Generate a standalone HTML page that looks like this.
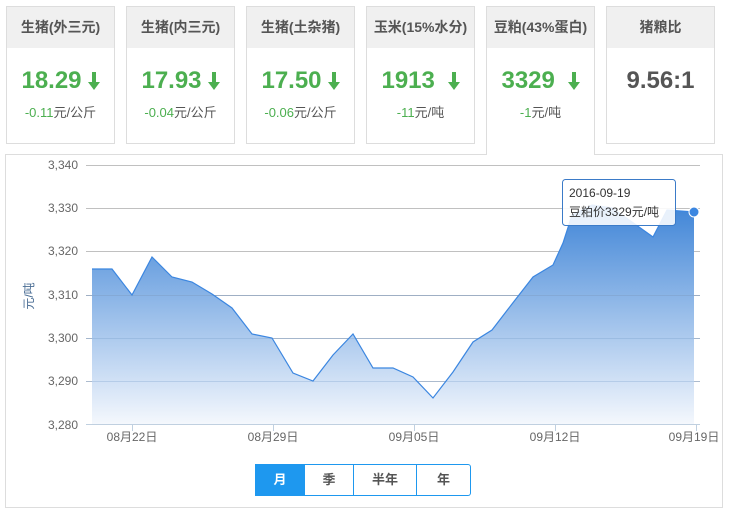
<!DOCTYPE html>
<html><head><meta charset="utf-8"><style>
body{margin:0;width:730px;height:515px;background:#fff;font-family:"Liberation Sans","Noto Sans CJK SC",sans-serif;position:relative;overflow:hidden}
.card{position:absolute;top:6px;width:107px;height:136px;border:1px solid #ddd;background:#fff;box-sizing:content-box}
.card .h{height:41px;background:#f0f0f0;color:#555;font-size:14px;font-weight:bold;text-align:center;line-height:41px}
.card .v{text-align:center;color:#4caf50;font-weight:bold;font-size:24px;margin-top:17px;height:32px;line-height:32px}
.card .v svg{vertical-align:-2px;margin-left:6px}
.card .d{text-align:center;font-size:13px;color:#555;margin-top:5px}
.card .d span{color:#4caf50}
.act{height:148px;border-bottom:none;z-index:2}
.panel{position:absolute;left:5px;top:154px;width:716px;height:352px;border:1px solid #ddd;background:#fff}
.btns{position:absolute;left:255px;top:464px;height:32px;display:flex;z-index:3}
.btns div{border:1px solid #1e98ef;border-left:none;height:30px;line-height:30px;text-align:center;font-size:13px;color:#555;font-weight:bold}
.btns div.on{background:#1e98ef;color:#fff;border-left:1px solid #1e98ef}
</style></head><body>
<div class="card" style="left:6px"><div class="h">生猪(外三元)</div><div class="v">18.29<svg width="12" height="18" viewBox="0 0 12 18"><path d="M4 0h4v10h4L6 18 0 10h4z" fill="#4caf50"/></svg></div><div class="d"><span>-0.11</span>元/公斤</div></div>
<div class="card" style="left:126px"><div class="h">生猪(内三元)</div><div class="v">17.93<svg width="12" height="18" viewBox="0 0 12 18"><path d="M4 0h4v10h4L6 18 0 10h4z" fill="#4caf50"/></svg></div><div class="d"><span>-0.04</span>元/公斤</div></div>
<div class="card" style="left:246px"><div class="h">生猪(土杂猪)</div><div class="v">17.50<svg width="12" height="18" viewBox="0 0 12 18"><path d="M4 0h4v10h4L6 18 0 10h4z" fill="#4caf50"/></svg></div><div class="d"><span>-0.06</span>元/公斤</div></div>
<div class="card" style="left:366px"><div class="h">玉米(15%水分)</div><div class="v">1913 <svg width="12" height="18" viewBox="0 0 12 18"><path d="M4 0h4v10h4L6 18 0 10h4z" fill="#4caf50"/></svg></div><div class="d"><span>-11</span>元/吨</div></div>
<div class="card act" style="left:486px"><div class="h">豆粕(43%蛋白)</div><div class="v">3329 <svg width="12" height="18" viewBox="0 0 12 18"><path d="M4 0h4v10h4L6 18 0 10h4z" fill="#4caf50"/></svg></div><div class="d"><span>-1</span>元/吨</div></div>
<div class="card" style="left:606px"><div class="h">猪粮比</div><div class="v" style="color:#555">9.56:1</div></div>
<div class="panel"></div>
<svg style="position:absolute;left:0;top:0;z-index:2" width="730" height="515">
<defs><linearGradient id="g" x1="0" y1="200" x2="0" y2="425" gradientUnits="userSpaceOnUse"><stop offset="0" stop-color="#3b82d6"/><stop offset="1" stop-color="#f5f8fd"/></linearGradient></defs>
<g stroke="#c0c0c0" stroke-width="1">
<line x1="86" x2="700" y1="165.5" y2="165.5"/><line x1="86" x2="700" y1="208.5" y2="208.5"/><line x1="86" x2="700" y1="251.5" y2="251.5"/><line x1="86" x2="700" y1="295.5" y2="295.5"/><line x1="86" x2="700" y1="338.5" y2="338.5"/><line x1="86" x2="700" y1="381.5" y2="381.5"/></g>
<path d="M92 425L92 269 112 269 132 295 152 257 172 277 192 282 212 294 232 308 252 334 272 338 293 373 313 381 333 355 353 334 373 368 393 368 413 377 433 398 453 372 473 342 492 330 512 304 533 277 553 265 563 243 572 215 592 205 612 208 632 222 653 237 667 210 694 212 694 425Z" fill="url(#g)"/>
<g opacity=".5"><line x1="86" x2="700" y1="295.5" y2="295.5" stroke="#7fa0c8"/><line x1="86" x2="700" y1="338.5" y2="338.5" stroke="#8aaed8"/><line x1="86" x2="700" y1="381.5" y2="381.5" stroke="#9ab8dc"/></g>
<polyline points="92,269 112,269 132,295 152,257 172,277 192,282 212,294 232,308 252,334 272,338 293,373 313,381 333,355 353,334 373,368 393,368 413,377 433,398 453,372 473,342 492,330 512,304 533,277 553,265 563,243 572,215 592,205 612,208 632,222 653,237 667,210 694,212" fill="none" stroke="#3b86e0" stroke-width="1.2"/>
<line x1="86" x2="700" y1="424.5" y2="424.5" stroke="#c0d0e0"/>
<g stroke="#c0d0e0"><line x1="132.5" x2="132.5" y1="425" y2="431"/><line x1="273.5" x2="273.5" y1="425" y2="431"/><line x1="414.5" x2="414.5" y1="425" y2="431"/><line x1="555.5" x2="555.5" y1="425" y2="431"/><line x1="696.5" x2="696.5" y1="425" y2="431"/></g>
<circle cx="694" cy="212" r="5" fill="#3b86e0" stroke="#fff" stroke-width="1"/>
<g font-size="12" fill="#666" text-anchor="end" font-family="Liberation Sans,sans-serif"><text x="78" y="169">3,340</text><text x="78" y="212">3,330</text><text x="78" y="255">3,320</text><text x="78" y="299">3,310</text><text x="78" y="342">3,300</text><text x="78" y="385">3,290</text><text x="78" y="429">3,280</text></g>
<g font-size="12" fill="#666" text-anchor="middle"><text x="132" y="441">08月22日</text><text x="273" y="441">08月29日</text><text x="414" y="441">09月05日</text><text x="555" y="441">09月12日</text><text x="694" y="441">09月19日</text></g>
<text transform="translate(33,296) rotate(-90)" font-size="12" fill="#4a6d94" text-anchor="middle">元/吨</text>
<rect x="562.5" y="179.5" width="113" height="46" rx="3" fill="#fff" fill-opacity=".88" stroke="#3b7bc8"/>
<text x="569" y="197" font-size="12" fill="#333">2016-09-19</text>
<text x="569" y="216" font-size="12" fill="#333">豆粕价3329元/吨</text>
</svg>
<div class="btns"><div class="on" style="width:48px">月</div><div style="width:48px">季</div><div style="width:62px">半年</div><div style="width:53px;border-radius:0 3px 3px 0">年</div></div>
</body></html>
